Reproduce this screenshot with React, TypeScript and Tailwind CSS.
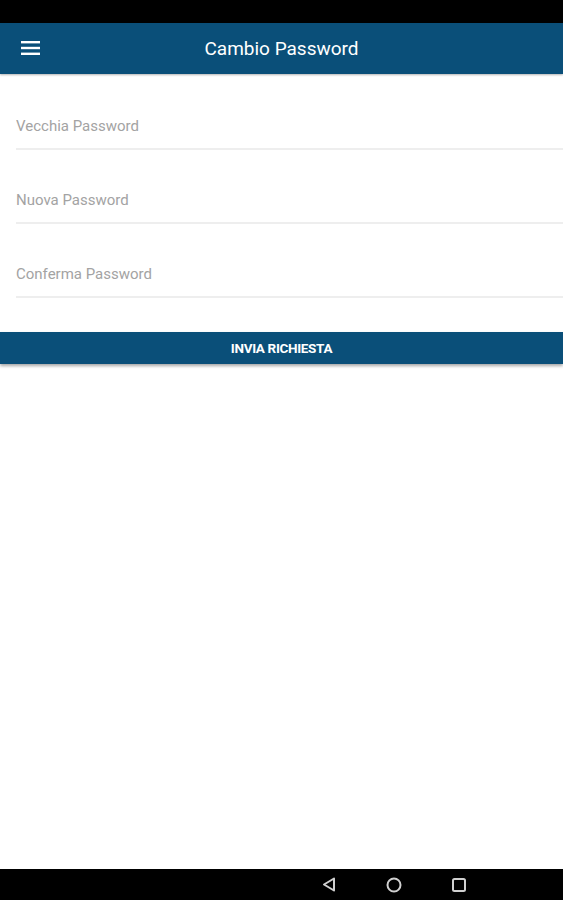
import React from "react";

const fields = ["Vecchia Password", "Nuova Password", "Conferma Password"];

export default function App() {
  return (
    <div className="w-[563px] h-[900px] flex flex-col bg-white font-['Roboto',sans-serif]">
      <div className="h-[23px] bg-black shrink-0" />
      <header className="h-[51px] bg-[#0a4f79] shrink-0 flex items-center relative shadow-[0_1px_2px_rgba(0,0,0,0.3)]">
        <svg className="absolute left-[21px] top-[18px]" width="19" height="14" viewBox="0 0 19 14">
          <rect x="0" y="0" width="19" height="2.4" fill="#fff" />
          <rect x="0" y="5.8" width="19" height="2.4" fill="#fff" />
          <rect x="0" y="11.6" width="19" height="2.4" fill="#fff" />
        </svg>
        <h1 className="w-full text-center text-white text-[19px] leading-none">Cambio Password</h1>
      </header>
      <form className="flex flex-col gap-[42px] pl-4 pt-[44px]">
        {fields.map((f) => (
          <div key={f} className="flex flex-col">
            <input
              type="password"
              placeholder={f}
              className="h-[17px] text-[15px] text-[#333] placeholder:text-[#a3a3a3] outline-none bg-transparent"
            />
            <div className="mt-[13px] h-[2px] bg-[#eeeeee]" />
          </div>
        ))}
      </form>
      <div className="pt-[34px]">
        <button
          type="button"
          className="w-full h-[32px] bg-[#0a4f79] text-white text-[13.5px] font-bold tracking-tight shadow-[0_2px_3px_rgba(0,0,0,0.35)]"
        >
          INVIA RICHIESTA
        </button>
      </div>
      <div className="flex-1" />
      <nav className="h-[31px] bg-black shrink-0 relative">
        <svg className="absolute left-[322px] top-[8px]" width="14" height="15" viewBox="0 0 14 15">
          <path d="M12 1.5 L2 7.5 L12 13.5 Z" fill="none" stroke="#d0d0d0" strokeWidth="2" strokeLinejoin="round" />
        </svg>
        <svg className="absolute left-[386px] top-[8px]" width="16" height="16" viewBox="0 0 16 16">
          <circle cx="8" cy="8" r="6.5" fill="none" stroke="#d0d0d0" strokeWidth="2" />
        </svg>
        <svg className="absolute left-[452px] top-[9px]" width="14" height="14" viewBox="0 0 14 14">
          <rect x="1" y="1" width="12" height="12" rx="1.5" fill="none" stroke="#d0d0d0" strokeWidth="2" />
        </svg>
      </nav>
    </div>
  );
}
